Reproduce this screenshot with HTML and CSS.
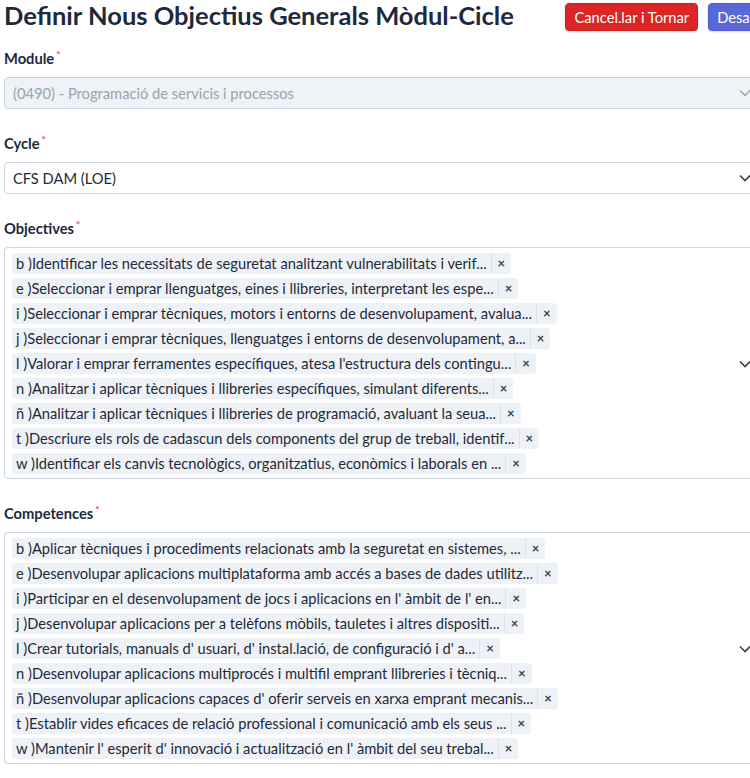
FILE: index.html
```html
<!DOCTYPE html>
<html lang="ca">
<head>
<meta charset="utf-8">
<title>Definir Nous Objectius Generals Mòdul-Cicle</title>
<link rel="stylesheet" href="styles.css">
</head>
<body>
<div class="page">
  <div class="header">
    <h1 class="title">Definir Nous Objectius Generals Mòdul-Cicle</h1>
    <div class="actions">
      <button class="btn btn-cancel">Cancel.lar i Tornar</button>
      <button class="btn btn-save">Desar</button>
    </div>
  </div>

  <div class="field">
    <div class="label">Module<span class="req">*</span></div>
    <div class="select is-disabled">
      <span class="value">(0490) - Programació de servicis i processos</span>
      <svg class="chev" viewBox="0 0 12 8"><path d="M1 1.5 6 6.5 11 1.5"/></svg>
    </div>
  </div>

  <div class="field">
    <div class="label">Cycle<span class="req">*</span></div>
    <div class="select">
      <span class="value">CFS DAM (LOE)</span>
      <svg class="chev dark" viewBox="0 0 12 8"><path d="M1 1.5 6 6.5 11 1.5"/></svg>
    </div>
  </div>

  <div class="field">
    <div class="label">Objectives<span class="req">*</span></div>
    <div class="multi">
      <div class="chips">
        <div class="chip"><span class="chip-text">b )Identificar les necessitats de seguretat analitzant vulnerabilitats i verif...</span><span class="chip-x">×</span></div>
        <div class="chip"><span class="chip-text">e )Seleccionar i emprar llenguatges, eines i llibreries, interpretant les espe...</span><span class="chip-x">×</span></div>
        <div class="chip"><span class="chip-text">i )Seleccionar i emprar tècniques, motors i entorns de desenvolupament, avalua...</span><span class="chip-x">×</span></div>
        <div class="chip"><span class="chip-text">j )Seleccionar i emprar tècniques, llenguatges i entorns de desenvolupament, a...</span><span class="chip-x">×</span></div>
        <div class="chip"><span class="chip-text">l )Valorar i emprar ferramentes específiques, atesa l'estructura dels contingu...</span><span class="chip-x">×</span></div>
        <div class="chip"><span class="chip-text">n )Analitzar i aplicar tècniques i llibreries específiques, simulant diferents...</span><span class="chip-x">×</span></div>
        <div class="chip"><span class="chip-text">ñ )Analitzar i aplicar tècniques i llibreries de programació, avaluant la seua...</span><span class="chip-x">×</span></div>
        <div class="chip"><span class="chip-text">t )Descriure els rols de cadascun dels components del grup de treball, identif...</span><span class="chip-x">×</span></div>
        <div class="chip"><span class="chip-text">w )Identificar els canvis tecnològics, organitzatius, econòmics i laborals en ...</span><span class="chip-x">×</span></div>
      </div>
      <svg class="chev dark" viewBox="0 0 12 8"><path d="M1 1.5 6 6.5 11 1.5"/></svg>
    </div>
  </div>

  <div class="field">
    <div class="label">Competences<span class="req">*</span></div>
    <div class="multi">
      <div class="chips">
        <div class="chip"><span class="chip-text">b )Aplicar tècniques i procediments relacionats amb la seguretat en sistemes, ...</span><span class="chip-x">×</span></div>
        <div class="chip"><span class="chip-text">e )Desenvolupar aplicacions multiplataforma amb accés a bases de dades utilitz...</span><span class="chip-x">×</span></div>
        <div class="chip"><span class="chip-text">i )Participar en el desenvolupament de jocs i aplicacions en l' àmbit de l' en...</span><span class="chip-x">×</span></div>
        <div class="chip"><span class="chip-text">j )Desenvolupar aplicacions per a telèfons mòbils, tauletes i altres dispositi...</span><span class="chip-x">×</span></div>
        <div class="chip"><span class="chip-text">l )Crear tutorials, manuals d' usuari, d' instal.lació, de configuració i d' a...</span><span class="chip-x">×</span></div>
        <div class="chip"><span class="chip-text">n )Desenvolupar aplicacions multiprocés i multifil emprant llibreries i tècniq...</span><span class="chip-x">×</span></div>
        <div class="chip"><span class="chip-text">ñ )Desenvolupar aplicacions capaces d' oferir serveis en xarxa emprant mecanis...</span><span class="chip-x">×</span></div>
        <div class="chip"><span class="chip-text">t )Establir vides eficaces de relació professional i comunicació amb els seus ...</span><span class="chip-x">×</span></div>
        <div class="chip"><span class="chip-text">w )Mantenir l' esperit d' innovació i actualització en l' àmbit del seu trebal...</span><span class="chip-x">×</span></div>
      </div>
      <svg class="chev dark" viewBox="0 0 12 8"><path d="M1 1.5 6 6.5 11 1.5"/></svg>
    </div>
  </div>
</div>
</body>
</html>
```

FILE: styles.css
```css
html, body {
  margin: 0;
  padding: 0;
  background: #ffffff;
  overflow: hidden;
}

body {
  font-family: "Lato", "Noto Sans", sans-serif;
  color: #1f2937;
  font-size: 14.7px;
}

.page {
  width: 760px;
  padding-left: 4px;
}

.header {
  display: flex;
  align-items: center;
  justify-content: space-between;
  height: 34px;
  margin-bottom: 14px;
}

.title {
  margin: 0;
  font-size: 25.5px;
  font-weight: 700;
  color: #1e293b;
  line-height: 30px;
  position: relative;
  top: -2px;
}

.actions {
  display: flex;
  gap: 10px;
}

.btn {
  font-family: inherit;
  font-size: 14.7px;
  color: #ffffff;
  border: 1px solid transparent;
  border-radius: 4px;
  height: 28px;
  padding: 0 8px;
  box-shadow: 0 1px 2px rgba(0,0,0,0.15);
}

.btn-cancel {
  background: #dc2626;
  border-color: #c81e1e;
}

.btn-save {
  background: #5a67d8;
  border-color: #4f5bd0;
}

.field {
  margin-bottom: 24px;
}

.label {
  font-size: 14.7px;
  font-weight: 700;
  line-height: 20px;
  height: 20px;
  color: #1e293b;
  margin-bottom: 9px;
}

.req {
  color: #ef4444;
  font-size: 10px;
  line-height: 0;
  position: relative;
  top: -6px;
  margin-left: 2px;
}

.select {
  display: flex;
  align-items: center;
  justify-content: space-between;
  height: 30px;
  border: 1px solid #cbd5e1;
  border-radius: 4px;
  padding: 0 12px 0 8px;
  background: #ffffff;
  color: #1f2937;
}

.select.is-disabled {
  background: #eff2f6;
  color: #9aa3ae;
}

.chev {
  width: 12px;
  height: 8px;
  fill: none;
  stroke: #9ca3af;
  stroke-width: 1.4;
}

.chev.dark {
  stroke: #374151;
  stroke-width: 1.6;
}

.multi {
  display: flex;
  align-items: center;
  justify-content: space-between;
  border: 1px solid #cbd5e1;
  border-radius: 4px;
  padding: 5px 12px 4px 7px;
}

.chips {
  display: flex;
  flex-direction: column;
  align-items: flex-start;
  gap: 4px;
}

.chip {
  display: flex;
  align-items: stretch;
  height: 21px;
  background: #eef2f7;
  border-radius: 3px;
  line-height: 21px;
  color: #1f2937;
}

.chip-text {
  padding: 0 4px;
  white-space: nowrap;
}

.chip-x {
  border-left: 1px solid #dde3ea;
  padding: 0 6px;
  font-size: 13px;
  font-weight: 700;
  color: #334155;
}
```
